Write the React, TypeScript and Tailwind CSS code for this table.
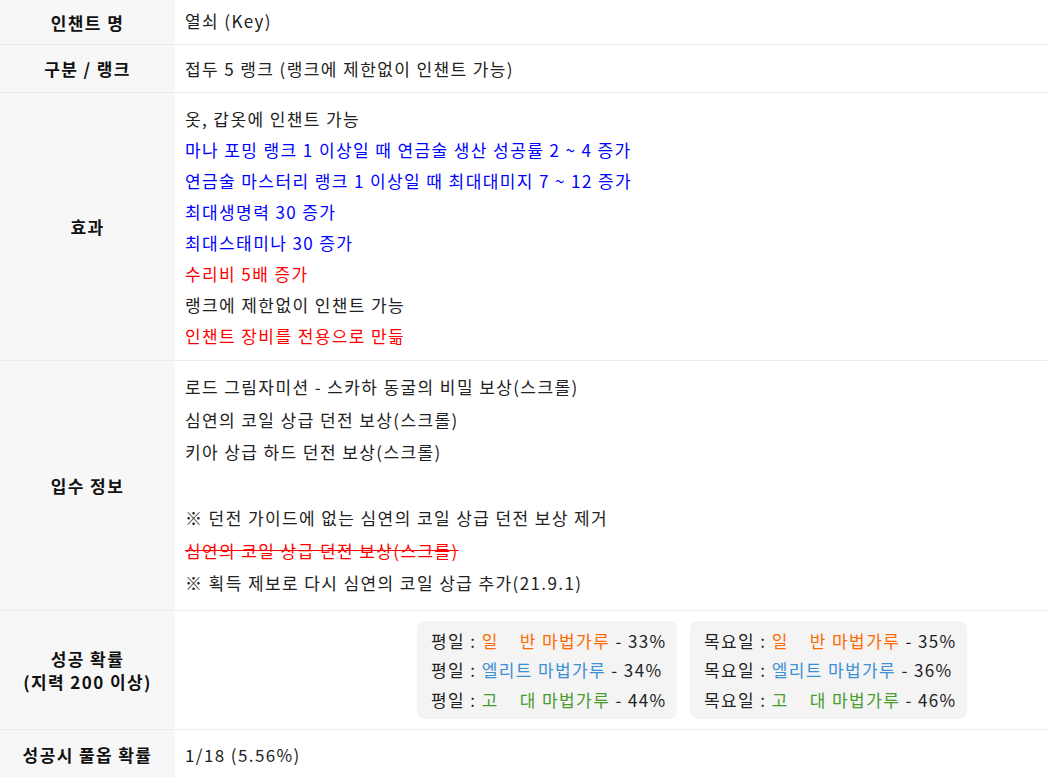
import React from "react";

const font = { fontFamily: '"Noto Sans CJK KR", "Noto Sans", sans-serif' };

function Row({ label, children, cls = "" }: { label: React.ReactNode; children: React.ReactNode; cls?: string }) {
  return (
    <div className="flex border-b border-[#ebebeb]">
      <div className="w-[175px] shrink-0 bg-[#f7f7f7] flex items-center justify-center text-center font-bold text-[17px] tracking-[1.4px] leading-[23px] text-[#111]">
        {label}
      </div>
      <div className={"flex-1 pl-[10px] text-[17px] tracking-[1.4px] text-[#222] " + cls}>{children}</div>
    </div>
  );
}

function Rate({ day, kind, pct }: { day: string; kind: "n" | "e" | "a"; pct: string }) {
  let name: React.ReactNode;
  if (kind === "n")
    name = (
      <span className="text-[#ff6a00]">
        <span className="inline-flex justify-between w-[calc(3em+4.2px)]"><span>일</span><span>반</span></span> 마법가루
      </span>
    );
  else if (kind === "e") name = <span className="text-[#3d8fd6]">엘리트 마법가루</span>;
  else
    name = (
      <span className="text-[#4b9b30]">
        <span className="inline-flex justify-between w-[calc(3em+4.2px)]"><span>고</span><span>대</span></span> 마법가루
      </span>
    );
  return (
    <div className="whitespace-nowrap">
      {day} : {name} - {pct}
    </div>
  );
}

export default function App() {
  return (
    <div className="w-[1047px] h-[777px] overflow-hidden bg-white" style={font}>
      <Row label="인챈트 명" cls="h-[44px] flex items-center pb-[2px]">열쇠 (Key)</Row>
      <Row label="구분 / 랭크" cls="h-[47px] flex items-center">접두 5 랭크 (랭크에 제한없이 인챈트 가능)</Row>
      <Row label="효과" cls="pt-[10px] pb-[9px] leading-[31px]">
        <div>옷, 갑옷에 인챈트 가능</div>
        <div className="text-[#0000ff]">마나 포밍 랭크 1 이상일 때 연금술 생산 성공률 2 ~ 4 증가</div>
        <div className="text-[#0000ff]">연금술 마스터리 랭크 1 이상일 때 최대대미지 7 ~ 12 증가</div>
        <div className="text-[#0000ff]">최대생명력 30 증가</div>
        <div className="text-[#0000ff]">최대스태미나 30 증가</div>
        <div className="text-[#ff0000]">수리비 5배 증가</div>
        <div>랭크에 제한없이 인챈트 가능</div>
        <div className="text-[#ff0000]">인챈트 장비를 전용으로 만듦</div>
      </Row>
      <Row label="입수 정보" cls="py-[10px] leading-[32.7px]">
        <div>로드 그림자미션 - 스카하 동굴의 비밀 보상(스크롤)</div>
        <div>심연의 코일 상급 던전 보상(스크롤)</div>
        <div>키아 상급 하드 던전 보상(스크롤)</div>
        <div>&nbsp;</div>
        <div>※ 던전 가이드에 없는 심연의 코일 상급 던전 보상 제거</div>
        <div className="text-[#ff0000] line-through">심연의 코일 상급 던전 보상(스크롤)</div>
        <div>※ 획득 제보로 다시 심연의 코일 상급 추가(21.9.1)</div>
      </Row>
      <Row
        label={
          <div>
            성공 확률
            <br />
            (지력 200 이상)
          </div>
        }
        cls="h-[118px] flex items-center pl-[242px] gap-[13px] leading-[29.5px]"
      >
        <div className="bg-[#f4f4f4] rounded-[8px] px-[14px] py-[5px] w-[260px]">
          <Rate day="평일" kind="n" pct="33%" />
          <Rate day="평일" kind="e" pct="34%" />
          <Rate day="평일" kind="a" pct="44%" />
        </div>
        <div className="bg-[#f4f4f4] rounded-[8px] px-[14px] py-[5px] w-[277px]">
          <Rate day="목요일" kind="n" pct="35%" />
          <Rate day="목요일" kind="e" pct="36%" />
          <Rate day="목요일" kind="a" pct="46%" />
        </div>
      </Row>
      <Row label="성공시 풀옵 확률" cls="h-[50px] flex items-center">1/18 (5.56%)</Row>
    </div>
  );
}
